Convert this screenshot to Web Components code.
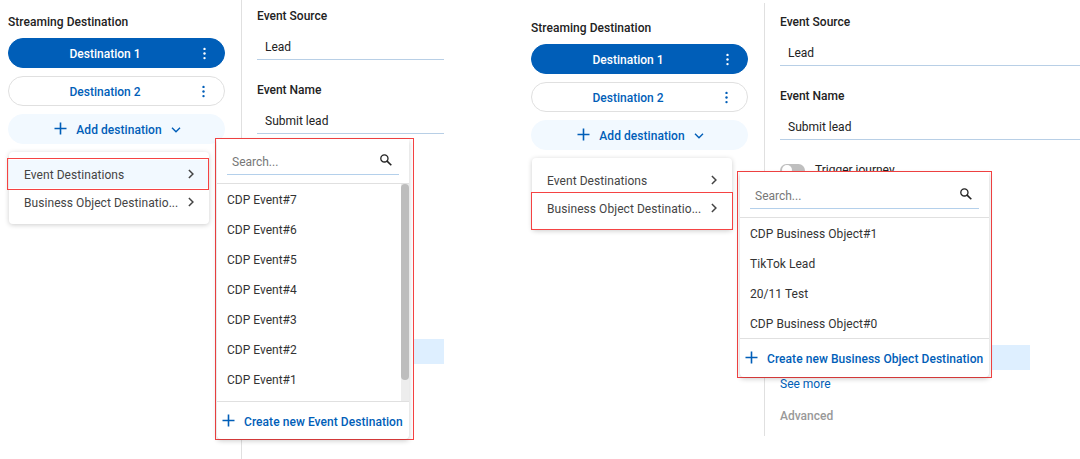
<!DOCTYPE html>
<html lang="en">
<head>
<meta charset="utf-8">
<title>Streaming Destination</title>
<style>
body{margin:0;background:#fff;font:12px/16px Roboto,sans-serif;color:#222;width:1080px;height:459px;overflow:hidden}
.page{display:grid;grid-template-columns:523px 557px;height:459px}
destination-view{--top:0px}
destination-view.second{--top:6px}
</style>
</head>
<body>
<div class="page">
  <destination-view>
    <destination-panel slot="side" active="event"></destination-panel>
    <form-field label="Event Source" value="Lead"></form-field>
    <form-field label="Event Name" value="Submit lead"></form-field>
    <info-band style="margin-top:205px"></info-band>
    <search-popover slot="popover" style="left:215px;top:138px;width:199px;height:302px;--pl:1px;--pr:4px;--list:219px;--foot:2px" action="Create new Event Destination" scroll>
      <span>CDP Event#7</span><span>CDP Event#6</span><span>CDP Event#5</span><span>CDP Event#4</span><span>CDP Event#3</span><span>CDP Event#2</span><span>CDP Event#1</span>
    </search-popover>
  </destination-view>
  <destination-view class="second">
    <destination-panel slot="side" active="object"></destination-panel>
    <form-field label="Event Source" value="Lead"></form-field>
    <form-field label="Event Name" value="Submit lead"></form-field>
    <toggle-switch>Trigger journey</toggle-switch>
    <info-band style="margin-top:167px;width:250px"></info-band>
    <div style="color:#005eb8;margin-top:6px">See more</div>
    <div style="color:#999;font-weight:500;margin-top:16px">Advanced</div>
    <search-popover slot="popover" style="left:214px;top:171px;width:255px;height:207px;--pl:2px;--pr:2px;--list:122px;--drop:1px;--foot:1px;--ls:.04px" action="Create new Business Object Destination">
      <span>CDP Business Object#1</span><span>TikTok Lead</span><span>20/11 Test</span><span>CDP Business Object#0</span>
    </search-popover>
  </destination-view>
</div>
<script>
const icons = {
  plus: '<svg width="13" height="13" viewBox="0 0 13 13"><path d="M6.5 .5v12M.5 6.5h12" stroke="currentColor" stroke-width="1.6" fill="none"/></svg>',
  down: '<svg width="10" height="6" viewBox="0 0 10 6"><path d="M1 .8l4 4 4-4" stroke="currentColor" stroke-width="1.4" fill="none"/></svg>',
  right: '<svg width="6" height="10" viewBox="0 0 6 10"><path d="M.9 1l4 4-4 4" stroke="currentColor" stroke-width="1.5" fill="none"/></svg>',
  dots: '<svg width="3" height="13" viewBox="0 0 3 13" fill="currentColor"><circle cx="1.5" cy="1.9" r="1.2"/><circle cx="1.5" cy="6.5" r="1.2"/><circle cx="1.5" cy="11.1" r="1.2"/></svg>',
  search: '<svg width="12" height="12" viewBox="0 0 12 12"><circle cx="4.4" cy="4.4" r="3.6" stroke="currentColor" stroke-width="1.3" fill="none"/><path d="M7.1 7.1l4.2 4.2" stroke="currentColor" stroke-width="1.6"/></svg>'
};
class Base extends HTMLElement {
  connectedCallback() {
    if (!this.shadowRoot) this.attachShadow({mode: 'open'}).innerHTML = this.view();
  }
}
customElements.define('destination-view', class extends Base {
  view() { return `<style>
    :host{display:grid;grid-template-columns:241px 1fr;position:relative;min-width:0}
    .form{border-left:1px solid #e0e0e0;padding:calc(8px + var(--top)) 0 0 15px;width:auto}
    :host(:not(.second)) .form{padding-right:79px}
    :host(.second) .form{margin-top:3px;padding-top:11px;height:422px}
    </style><slot name="side"></slot><div class="form"><slot></slot></div><slot name="popover"></slot>`; }
});
customElements.define('form-field', class extends Base {
  view() { return `<style>
    :host{display:block;height:52px;margin-bottom:22px}
    b{display:block;font-weight:500;height:16px}
    div{box-sizing:border-box;height:36px;padding:15px 8px 0;border-bottom:1px solid #b8cfe6}
    </style><b>${this.getAttribute('label')}</b><div>${this.getAttribute('value')}</div>`; }
});
customElements.define('toggle-switch', class extends Base {
  view() { return `<style>
    :host{display:flex;align-items:center;gap:10px;height:16px;margin-top:1px}
    i{width:25px;height:13px;border-radius:7px;background:#bfbfbf;display:flex;align-items:center}
    i::before{content:"";width:10px;height:10px;border-radius:50%;background:#fff;margin-left:2px}
    </style><i></i><slot></slot>`; }
});
customElements.define('info-band', class extends Base {
  view() { return `<style>:host{display:block;height:25px;background:#deefff}</style>`; }
});
customElements.define('destination-pill', class extends Base {
  view() { const add = this.hasAttribute('add'); return `<style>
    :host{box-sizing:border-box;display:flex;align-items:center;justify-content:center;height:30px;border-radius:15px;border:1px solid #e0e0e0;color:#005eb8;font-weight:500;background:#fff}
    :host([selected]){background:#005eb8;border-color:#005eb8;color:#fff}
    :host([add]){background:#f2f9ff;border-color:#f2f9ff;padding:2px 0 0 2px;letter-spacing:.05px}
    svg{display:block;flex:none}.name{flex:1;text-align:center;padding:2px 0 0 18px}
    .more{width:41px;display:flex;justify-content:center}
    :host([selected]) .more{width:39px}:host([selected]) .name{padding-left:16px}
    .plus{margin-right:9px;margin-top:-4px}.down{margin-left:9px}
    </style>` + (add ? `<span class="plus">${icons.plus}</span><slot></slot><span class="down">${icons.down}</span>`
      : `<span class="name"><slot></slot></span><span class="more">${icons.dots}</span>`); }
});
customElements.define('destination-panel', class extends Base {
  view() { const ev = this.getAttribute('active') === 'event'; return `<style>
    :host{display:block;padding:calc(14px + var(--top)) 16px 0 8px}
    h2{font:500 12px/16px Roboto,sans-serif;letter-spacing:.04px;margin:0 0 8px}
    .pills{display:grid;gap:8px}
    .menu{box-sizing:border-box;position:relative;width:200px;height:72px;margin:8px 0 0 1px;padding-top:8px;border-radius:4px;background:#fff;box-shadow:0 1px 5px #0003;color:#444}
    .item{display:flex;align-items:center;height:28px;padding:0 15px;letter-spacing:.06px}
    .item span{flex:1;padding-top:2px;white-space:nowrap}.item.on{background:#f2f9ff}.item svg{display:block}
    .mark{position:absolute;box-sizing:border-box;border:1px solid #f54343;left:-2px;width:202px;top:6px;height:32px}
    .mark.low{left:-1px;top:34px;height:38px}
    </style><h2>Streaming Destination</h2>
    <div class="pills"><destination-pill selected>Destination 1</destination-pill><destination-pill>Destination 2</destination-pill><destination-pill add>Add destination</destination-pill></div>
    <div class="menu"><div class="item ${ev ? 'on' : ''}"><span>Event Destinations</span>${icons.right}</div>
    <div class="item"><span>Business Object Destinatio...</span>${icons.right}</div><div class="mark ${ev ? '' : 'low'}"></div></div>`; }
});
customElements.define('search-popover', class extends Base {
  view() { return `<style>
    :host{position:absolute;box-sizing:border-box;border:1px solid #f54343;background:#fff;padding:0 var(--pr) 0 var(--pl)}
    .box{height:100%;display:flex;flex-direction:column;box-shadow:0 2px 5px #0003;border-radius:0 0 4px 4px}
    .search{box-sizing:border-box;height:calc(36px + var(--drop,0px));margin:0 10px;padding:calc(15px + var(--drop,0px)) 7px 0 5px;border-bottom:1px solid #b4d0eb;display:flex;justify-content:space-between;color:#777}
    .search svg{color:#222;display:block}
    .list{height:var(--list);flex:none;margin-top:8px;border-top:1px solid #e0e0e0;border-bottom:1px solid #e0e0e0;box-sizing:border-box;display:flex;justify-content:space-between;overflow:hidden}
    .rows{display:flex;flex-direction:column;letter-spacing:var(--ls,0)}
    ::slotted(span){flex:none;height:30px;line-height:32px;padding-left:10px;color:#333}
    .bar{width:8px;background:#ededed}.bar i{display:block;height:196px;border-radius:4px;background:#bdbdbd}
    .foot{flex:1;display:flex;align-items:center;gap:9px;padding:var(--foot) 0 0 5px;color:#005eb8;font-weight:500;letter-spacing:.06px;white-space:nowrap}
    .foot svg{margin-top:-3px}
    </style><div class="box"><div class="search"><span>Search...</span>${icons.search}</div>
    <div class="list"><div class="rows"><slot></slot></div>${this.hasAttribute('scroll') ? '<div class="bar"><i></i></div>' : ''}</div>
    <div class="foot">${icons.plus}<span>${this.getAttribute('action')}</span></div></div>`; }
});
</script>
</body>
</html>
